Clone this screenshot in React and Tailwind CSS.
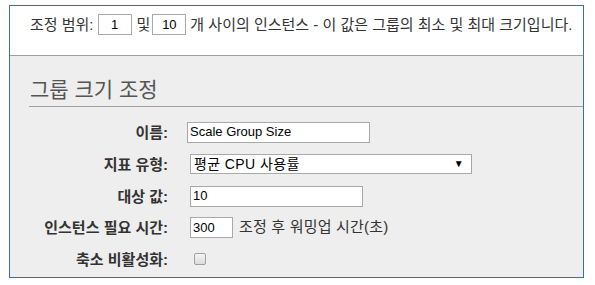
import React from 'react';

const font = { fontFamily: '"Liberation Sans", "Noto Sans CJK KR", Arial, sans-serif' };

const Row = ({ label, h, children }) => (
  <div className={`flex items-center ${h}`}>
    <div className="w-[158px] text-right text-[15px] font-bold text-[#333] leading-none whitespace-nowrap">{label}</div>
    <div className="flex items-center pl-[22px]">{children}</div>
  </div>
);

const App = () => {
  return (
    <div className="w-[595px] h-[285px] bg-white pt-[5px] pl-[9px]" style={font}>
      <div className="w-[575px] h-[273px] border border-[#3b6ea5] flex flex-col">
        {/* range */}
        <div className="h-[50px] bg-white border-b border-[#a0a0a0] flex items-start pt-[8px] pl-[20px] text-[15px] text-[#333] whitespace-nowrap">
          <span className="leading-[21px]">조정 범위:</span>
          <div className="ml-[4px] w-[34px] h-[21px] border border-[#a9a9a9] flex items-center justify-center text-[13px] text-black">1</div>
          <span className="ml-[5px] leading-[21px]">및</span>
          <div className="ml-[2px] w-[34px] h-[21px] border border-[#a9a9a9] flex items-center justify-center text-[13px] text-black">10</div>
          <span className="ml-[4px] leading-[21px]">개 사이의 인스턴스 - 이 값은 그룹의 최소 및 최대 크기입니다.</span>
        </div>

        <div className="flex-1 bg-[#eeeeee]">
          <div className="ml-[19px] mt-[22px] border-b border-[#a0a0a0] pb-[4px] pl-[1px] text-[21px] leading-[24px] text-[#555]">
            그룹 크기 조정
          </div>

          <div className="mt-[9px]">
            <Row label="이름:" h="h-[32px]">
              <div className="-ml-[3px] w-[183px] h-[21px] bg-white border border-[#a9a9a9] flex items-center px-[2px] text-[13px] text-black">
                Scale Group Size
              </div>
            </Row>
            <Row label="지표 유형:" h="h-[32px]">
              <div className="w-[282px] h-[20px] bg-white border border-[#a9a9a9] flex items-center justify-between pl-[3px] pr-[7px] text-[14px] tracking-[0.4px] text-black">
                <span>평균 CPU 사용률</span>
                <span className="text-[10px] leading-none">▼</span>
              </div>
            </Row>
            <Row label="대상 값:" h="h-[32px]">
              <div className="w-[173px] h-[21px] bg-white border border-[#a9a9a9] flex items-center px-[2px] text-[13px] text-black">
                10
              </div>
            </Row>
            <Row label="인스턴스 필요 시간:" h="h-[31px]">
              <div className="w-[43px] h-[21px] bg-white border border-[#a9a9a9] flex items-center px-[2px] text-[13px] text-black">
                300
              </div>
              <span className="ml-[6px] text-[15px] tracking-[0.2px] text-[#333] whitespace-nowrap">조정 후 워밍업 시간(초)</span>
            </Row>
            <Row label="축소 비활성화:" h="h-[32px]">
              <div className="ml-[4px] w-[12px] h-[12px] rounded-[2px] border border-[#a0a0a0] bg-gradient-to-b from-[#f4f4f4] to-[#dcdcdc]" />
            </Row>
          </div>
        </div>
      </div>
    </div>
  );
};

export default App;
